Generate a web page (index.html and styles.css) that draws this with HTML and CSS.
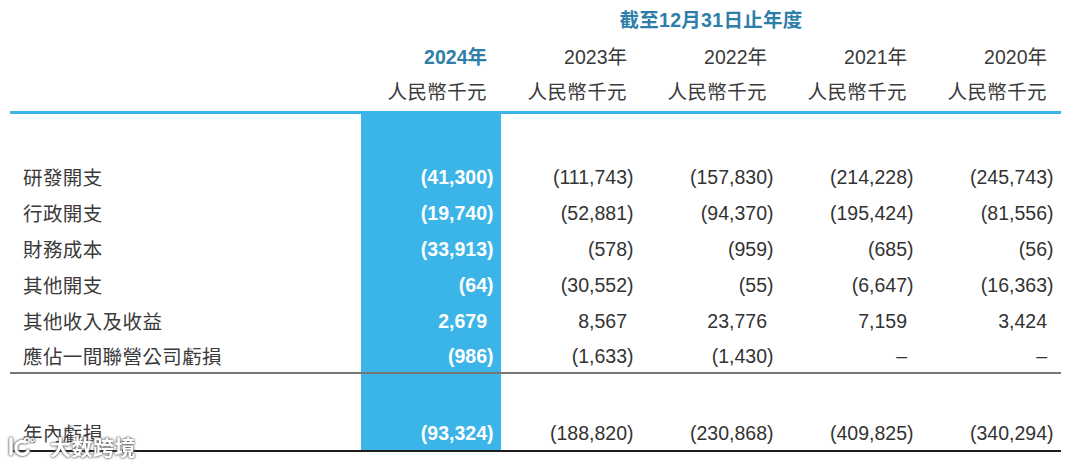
FILE: index.html
```html
<!DOCTYPE html>
<html lang="zh-Hant">
<head>
<meta charset="utf-8">
<title>財務摘要</title>
<link rel="stylesheet" href="styles.css">
</head>
<body>
<div class="page">
  <div class="table">
    <div class="cell"></div>
    <div class="title">截至12月31日止年度</div>

    <div class="cell hdr-year"></div>
    <div class="cell num year cur">2024年</div>
    <div class="cell num year">2023年</div>
    <div class="cell num year">2022年</div>
    <div class="cell num year">2021年</div>
    <div class="cell num year">2020年</div>

    <div class="cell unit-row"></div>
    <div class="cell num unit unit-row">人民幣千元</div>
    <div class="cell num unit unit-row">人民幣千元</div>
    <div class="cell num unit unit-row">人民幣千元</div>
    <div class="cell num unit unit-row">人民幣千元</div>
    <div class="cell num unit unit-row">人民幣千元</div>

    <div class="rule-blue"></div>

    <div class="cell label first">研發開支</div>
    <div class="cell num hl first"><span class="neg">(41,300)</span></div>
    <div class="cell num first"><span class="neg">(111,743)</span></div>
    <div class="cell num first"><span class="neg">(157,830)</span></div>
    <div class="cell num first"><span class="neg">(214,228)</span></div>
    <div class="cell num first"><span class="neg">(245,743)</span></div>

    <div class="cell label">行政開支</div>
    <div class="cell num hl"><span class="neg">(19,740)</span></div>
    <div class="cell num"><span class="neg">(52,881)</span></div>
    <div class="cell num"><span class="neg">(94,370)</span></div>
    <div class="cell num"><span class="neg">(195,424)</span></div>
    <div class="cell num"><span class="neg">(81,556)</span></div>

    <div class="cell label">財務成本</div>
    <div class="cell num hl"><span class="neg">(33,913)</span></div>
    <div class="cell num"><span class="neg">(578)</span></div>
    <div class="cell num"><span class="neg">(959)</span></div>
    <div class="cell num"><span class="neg">(685)</span></div>
    <div class="cell num"><span class="neg">(56)</span></div>

    <div class="cell label">其他開支</div>
    <div class="cell num hl"><span class="neg">(64)</span></div>
    <div class="cell num"><span class="neg">(30,552)</span></div>
    <div class="cell num"><span class="neg">(55)</span></div>
    <div class="cell num"><span class="neg">(6,647)</span></div>
    <div class="cell num"><span class="neg">(16,363)</span></div>

    <div class="cell label">其他收入及收益</div>
    <div class="cell num hl">2,679</div>
    <div class="cell num">8,567</div>
    <div class="cell num">23,776</div>
    <div class="cell num">7,159</div>
    <div class="cell num">3,424</div>

    <div class="cell label last">應佔一間聯營公司虧損</div>
    <div class="cell num hl last"><span class="neg">(986)</span></div>
    <div class="cell num last"><span class="neg">(1,633)</span></div>
    <div class="cell num last"><span class="neg">(1,430)</span></div>
    <div class="cell num last">–</div>
    <div class="cell num last">–</div>

    <div class="rule-thin"></div>

    <div class="cell label total">年內虧損</div>
    <div class="cell num hl total"><span class="neg">(93,324)</span></div>
    <div class="cell num total"><span class="neg">(188,820)</span></div>
    <div class="cell num total"><span class="neg">(230,868)</span></div>
    <div class="cell num total"><span class="neg">(409,825)</span></div>
    <div class="cell num total"><span class="neg">(340,294)</span></div>

    <div class="rule-thick"></div>
  </div>

  <div class="watermark">
    <svg class="wm-logo" width="28" height="22" viewBox="0 0 28 22">
      <path d="M3 4 L3 19" stroke="#ffffff" stroke-width="3.4" stroke-linecap="round" fill="none"/>
      <path d="M17 7 A6.5 6.5 0 1 0 20 16" stroke="#ffffff" stroke-width="3.2" stroke-linecap="round" fill="none"/>
      <circle cx="19" cy="5" r="2.3" fill="none" stroke="#ffffff" stroke-width="1.5"/>
      <circle cx="24.5" cy="5" r="1.7" fill="none" stroke="#ffffff" stroke-width="1.3"/>
    </svg>
    <span class="wm-text">大数跨境</span>
  </div>
</div>
</body>
</html>
```
FILE: styles.css
```css
* { box-sizing: border-box; }

html, body {
  margin: 0;
  padding: 0;
  background: #ffffff;
}

body {
  font-family: "Liberation Sans", "Noto Sans CJK TC", sans-serif;
  color: #333333;
}

.page {
  position: relative;
  width: 1080px;
  height: 467px;
  overflow: hidden;
}

.table {
  display: grid;
  grid-template-columns: 351px repeat(5, 140px);
  margin-left: 10px;
  width: 1051px;
}

.cell {
  font-size: 19.5px;
  line-height: 22px;
  padding-top: 7px;
  padding-bottom: 7px;
  white-space: nowrap;
}

.title {
  grid-column: 2 / span 5;
  text-align: center;
  font-weight: bold;
  color: #2e7eaa;
  font-size: 19.5px;
  line-height: 22px;
  padding-top: 9px;
  padding-bottom: 7px;
  letter-spacing: 0.3px;
}

.year {
  padding-top: 8px;
  padding-bottom: 7px;
  color: #3a3a3a;
}

.year.cur {
  font-weight: bold;
  color: #2e7eaa;
}

.unit-row {
  padding-top: 5px;
  padding-bottom: 9px;
}

.unit {
  color: #3a3a3a;
  font-family: "Noto Sans CJK TC", sans-serif;
  letter-spacing: 0.4px;
}

.num {
  text-align: right;
  padding-right: 14px;
}

.label {
  padding-left: 13px;
  color: #3a3a3a;
  font-family: "Noto Sans CJK TC", sans-serif;
  letter-spacing: 0.4px;
}

.hl {
  background: #3bb4e7;
  color: #ffffff;
  font-weight: bold;
}

.neg {
  display: inline-block;
  margin-right: -0.333em;
}

.first {
  padding-top: 52px;
}

.last {
  padding-top: 6px;
  padding-bottom: 5px;
}

.total {
  padding-top: 48px;
  padding-bottom: 6px;
}

.rule-blue {
  grid-column: 1 / -1;
  height: 3px;
  background: #3bb4e7;
}

.rule-thin {
  grid-column: 1 / -1;
  height: 2px;
  background: #757575;
}

.rule-thick {
  grid-column: 1 / -1;
  height: 2px;
  background: #1e1e1e;
}

.watermark {
  position: absolute;
  left: 8px;
  top: 434px;
  display: flex;
  align-items: center;
  gap: 14px;
  filter: drop-shadow(0 0 1px rgba(70, 70, 70, 0.95)) drop-shadow(0 0 1px rgba(120, 120, 120, 0.6));
}

.wm-logo {
  display: block;
}

.wm-text {
  font-family: "Noto Sans CJK SC", sans-serif;
  font-weight: bold;
  font-size: 21px;
  line-height: 24px;
  color: #ffffff;
  letter-spacing: 0.5px;
}
```
